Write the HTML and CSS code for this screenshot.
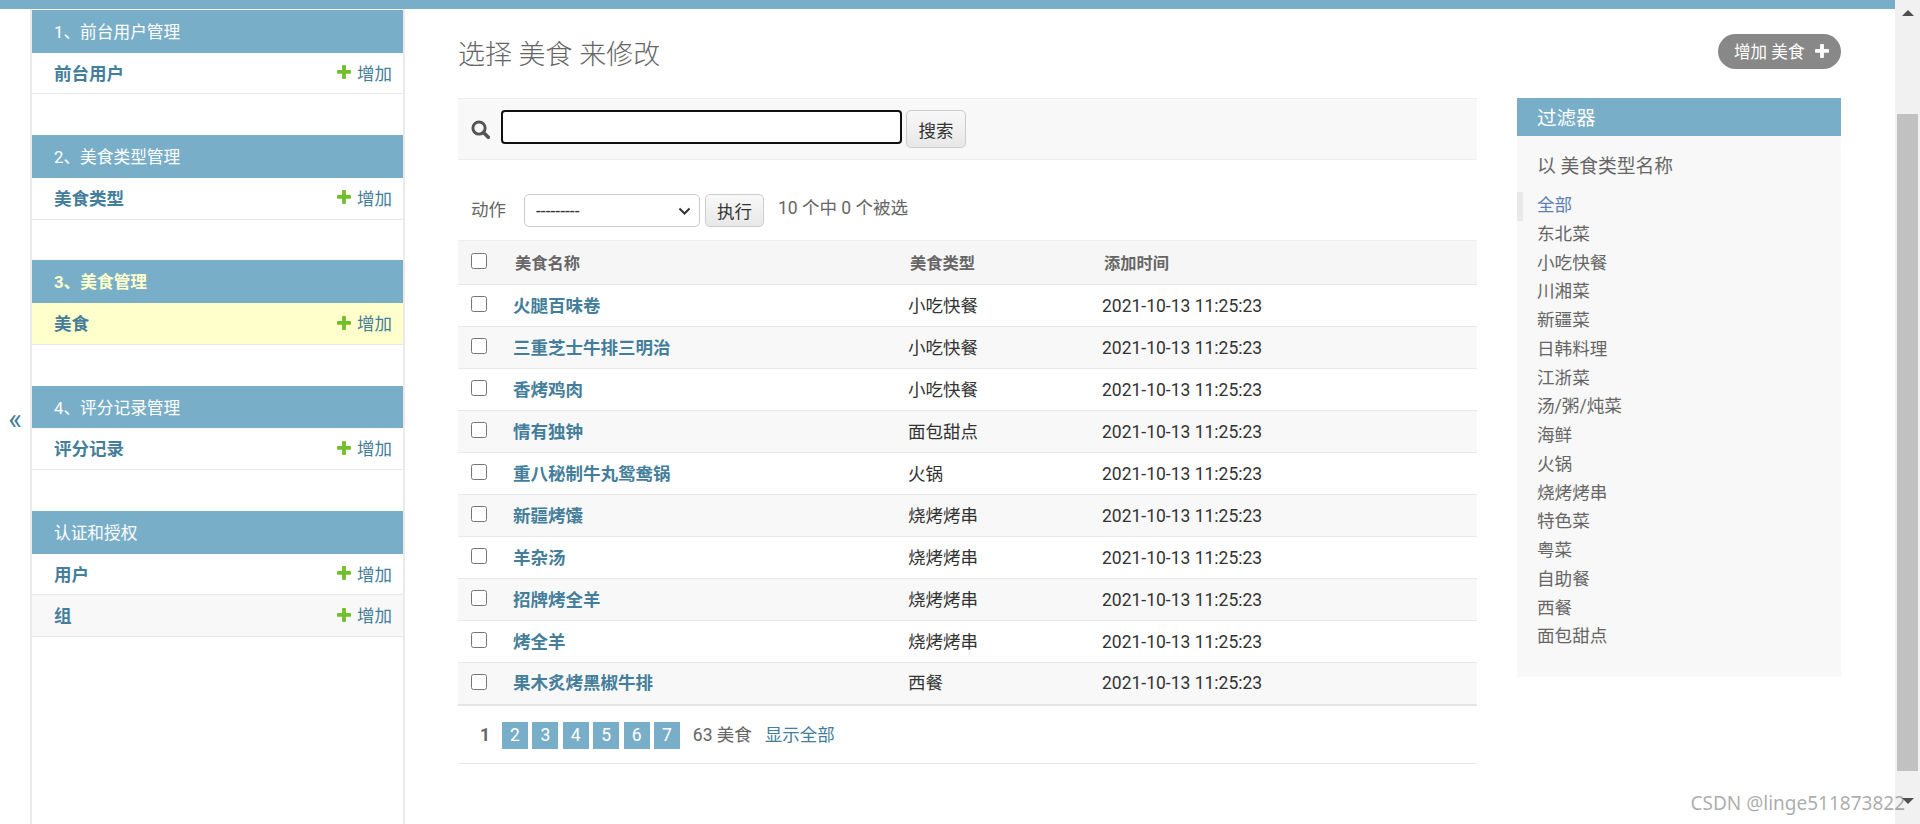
FILE: index.html
```html
<!DOCTYPE html>
<html lang="zh-CN">
<head>
<meta charset="utf-8">
<title>选择 美食 来修改</title>
<link rel="stylesheet" href="styles.css">
</head>
<body>
<svg class="defs" aria-hidden="true"><symbol id="plus" viewBox="192 192 1408 1408"><path d="M1600 796v192q0 40-28 68t-68 28h-416v416q0 40-28 68t-68 28h-192q-40 0-68-28t-28-68v-416h-416q-40 0-68-28t-28-68v-192q0-40 28-68t68-28h416v-416q0-40 28-68t68-28h192q40 0 68 28t28 68v416h416q40 0 68 28t28 68z"/></symbol></svg>
<div class="page">
  <div class="viewport">
    <div class="topbar"></div>
    <div class="main">
      <div class="toggle"><span>«</span></div>
      <nav class="sidebar">
        <section class="module">
          <div class="caption">1、前台用户管理</div>
          <div class="mrow"><a class="mname">前台用户</a><a class="madd"><svg class="plus"><use href="#plus"/></svg>增加</a></div>
        </section>
        <section class="module">
          <div class="caption">2、美食类型管理</div>
          <div class="mrow"><a class="mname">美食类型</a><a class="madd"><svg class="plus"><use href="#plus"/></svg>增加</a></div>
        </section>
        <section class="module">
          <div class="caption current">3、美食管理</div>
          <div class="mrow active"><a class="mname">美食</a><a class="madd"><svg class="plus"><use href="#plus"/></svg>增加</a></div>
        </section>
        <section class="module">
          <div class="caption">4、评分记录管理</div>
          <div class="mrow"><a class="mname">评分记录</a><a class="madd"><svg class="plus"><use href="#plus"/></svg>增加</a></div>
        </section>
        <section class="module">
          <div class="caption">认证和授权</div>
          <div class="mrow"><a class="mname">用户</a><a class="madd"><svg class="plus"><use href="#plus"/></svg>增加</a></div>
          <div class="mrow alt"><a class="mname">组</a><a class="madd"><svg class="plus"><use href="#plus"/></svg>增加</a></div>
        </section>
      </nav>
      <main class="content">
        <div class="titlerow">
          <h1 class="title">选择 美食 来修改</h1>
          <a class="addbtn">增加 美食<svg class="plus white"><use href="#plus"/></svg></a>
        </div>
        <div class="columns">
          <div class="changelist">
            <div class="toolbar">
              <svg class="searchicon" viewBox="0 0 18 18"><circle cx="7.6" cy="7.6" r="5.8" fill="none" stroke="#555" stroke-width="2.8"/><path d="M11.8 11.8l4.6 4.6" stroke="#555" stroke-width="3.4" stroke-linecap="round"/></svg>
              <input class="searchbox" type="text">
              <button class="btn searchbtn" type="button">搜索</button>
            </div>
            <div class="actions">
              <span class="actlabel">动作</span>
              <select class="actselect"><option>---------</option></select>
              <button class="btn gobtn" type="button">执行</button>
              <span class="counter">10 个中 0 个被选</span>
            </div>
            <table class="results">
              <colgroup><col class="c1"><col class="c2"><col class="c3"><col class="c4"></colgroup>
              <thead>
                <tr><th class="cbcell"><input class="cb" type="checkbox"></th><th>美食名称</th><th>美食类型</th><th>添加时间</th></tr>
              </thead>
              <tbody>
                <tr><td class="cbcell"><input class="cb" type="checkbox"></td><td><a class="name">火腿百味卷</a></td><td>小吃快餐</td><td>2021-10-13 11:25:23</td></tr>
                <tr><td class="cbcell"><input class="cb" type="checkbox"></td><td><a class="name">三重芝士牛排三明治</a></td><td>小吃快餐</td><td>2021-10-13 11:25:23</td></tr>
                <tr><td class="cbcell"><input class="cb" type="checkbox"></td><td><a class="name">香烤鸡肉</a></td><td>小吃快餐</td><td>2021-10-13 11:25:23</td></tr>
                <tr><td class="cbcell"><input class="cb" type="checkbox"></td><td><a class="name">情有独钟</a></td><td>面包甜点</td><td>2021-10-13 11:25:23</td></tr>
                <tr><td class="cbcell"><input class="cb" type="checkbox"></td><td><a class="name">重八秘制牛丸鸳鸯锅</a></td><td>火锅</td><td>2021-10-13 11:25:23</td></tr>
                <tr><td class="cbcell"><input class="cb" type="checkbox"></td><td><a class="name">新疆烤馕</a></td><td>烧烤烤串</td><td>2021-10-13 11:25:23</td></tr>
                <tr><td class="cbcell"><input class="cb" type="checkbox"></td><td><a class="name">羊杂汤</a></td><td>烧烤烤串</td><td>2021-10-13 11:25:23</td></tr>
                <tr><td class="cbcell"><input class="cb" type="checkbox"></td><td><a class="name">招牌烤全羊</a></td><td>烧烤烤串</td><td>2021-10-13 11:25:23</td></tr>
                <tr><td class="cbcell"><input class="cb" type="checkbox"></td><td><a class="name">烤全羊</a></td><td>烧烤烤串</td><td>2021-10-13 11:25:23</td></tr>
                <tr><td class="cbcell"><input class="cb" type="checkbox"></td><td><a class="name">果木炙烤黑椒牛排</a></td><td>西餐</td><td>2021-10-13 11:25:23</td></tr>
              </tbody>
            </table>
            <div class="paginator">
              <span class="cur">1</span>
              <a class="pg">2</a><a class="pg">3</a><a class="pg">4</a><a class="pg">5</a><a class="pg">6</a><a class="pg">7</a>
              <span class="total">63 美食</span>
              <a class="showall">显示全部</a>
            </div>
          </div>
          <aside class="filter">
            <h2 class="fhead">过滤器</h2>
            <h3 class="fby">以 美食类型名称</h3>
            <ul class="flist">
              <li class="sel">全部</li><li>东北菜</li><li>小吃快餐</li><li>川湘菜</li><li>新疆菜</li><li>日韩料理</li><li>江浙菜</li><li>汤/粥/炖菜</li><li>海鲜</li><li>火锅</li><li>烧烤烤串</li><li>特色菜</li><li>粤菜</li><li>自助餐</li><li>西餐</li><li>面包甜点</li>
            </ul>
          </aside>
        </div>
      </main>
    </div>
  </div>
  <div class="scrollbar">
    <div class="arrow up"></div>
    <div class="thumb"></div>
    <div class="arrow down"></div>
  </div>
</div>
<div class="watermark">CSDN @linge511873822</div>
</body>
</html>
```
FILE: styles.css
```css
* { box-sizing: border-box; }
html, body { margin: 0; height: 824px; overflow: hidden; background: #fff; }
body { font-family: Roboto, "Noto Sans CJK SC", sans-serif; font-size: 17.5px; color: #333; }
.defs { display: none; }
.page { display: flex; height: 824px; }
.viewport { flex: 1; min-width: 0; display: flex; flex-direction: column; }
.topbar { height: 9px; background: #79aec8; flex: none; }
.main { flex: 1; display: flex; min-height: 0; }

.toggle { width: 30px; flex: none; display: flex; align-items: center; justify-content: center; color: #447e9b; font-size: 29px; }
.toggle span { margin-top: 5px; }

.sidebar { width: 375px; flex: none; border-left: 2px solid #eaeaea; border-right: 2px solid #eaeaea; padding-top: 0.9px; }
.module { margin-bottom: 40.75px; }
.caption { height: 42.75px; background: #79aec8; color: #fff; font-size: 16.7px; line-height: 45px; padding-left: 22px; white-space: nowrap; }
.caption.current { color: #ffc; font-weight: 700; }
.mrow { height: 41.75px; border-bottom: 1px solid #e8e8e8; display: flex; align-items: center; justify-content: space-between; padding: 0 11px 2px 22px; font-size: 17.5px; }
.mrow.active { background: #ffc; }
.mrow.alt { background: #f8f8f8; }
.mname { color: #447e9b; font-weight: 700; }
.madd { color: #447e9b; display: flex; align-items: center; }
.plus { width: 14px; height: 14px; fill: #70bf2b; margin-right: 6px; flex: none; }
.plus.white { fill: #fff; margin: 0 0 0 10px; }

.content { flex: 1; min-width: 0; padding: 0 54px 0 53px; }
.titlerow { height: 89px; display: flex; justify-content: space-between; align-items: flex-start; }
.title { margin: 0; padding-top: 26px; font-size: 27px; line-height: 40px; font-weight: 300; color: #666; }
.addbtn { margin-top: 25px; height: 35px; width: 123px; background: #888; color: #fff; border-radius: 18px; display: flex; align-items: center; padding: 0 0 2px 16px; font-size: 16.6px; white-space: nowrap; }

.columns { display: flex; justify-content: space-between; align-items: flex-start; }
.changelist { width: 1019px; flex: none; }

.toolbar { height: 62px; background: #f8f8f8; border-top: 1px solid #eee; border-bottom: 1px solid #eee; display: flex; align-items: flex-start; padding: 11px 0 0 13px; }
.searchicon { width: 19px; height: 19px; margin: 10px 11px 0 0; flex: none; }
.searchbox { width: 401px; height: 34px; border: 2.5px solid #101010; border-radius: 4px; background: #fff; margin: 0; padding: 0; outline: none; }
.btn { font-family: inherit; font-size: 17.5px; color: #333; background: linear-gradient(#f8f8f8, #e8e8e8); border: 1px solid #ccc; border-radius: 5px; padding: 0; margin: 0; }
.searchbtn { width: 60px; height: 38px; margin-left: 4px; }

.actions { height: 80px; display: flex; align-items: flex-start; padding: 34px 0 0 13px; }
.actlabel { width: 53px; color: #666; line-height: 32px; }
.actselect { width: 176px; height: 33px; border: 1px solid #ccc; border-radius: 5px; font-family: inherit; font-size: 17.5px; color: #333; padding: 0 6px 0 11px; margin: 0; appearance: none; background: #fff url("data:image/svg+xml,%3Csvg xmlns='http://www.w3.org/2000/svg' width='13' height='8' viewBox='0 0 13 8'%3E%3Cpath d='M1.5 1.5l5 5 5-5' fill='none' stroke='%23333' stroke-width='2'/%3E%3C/svg%3E") no-repeat right 8px center; }
.gobtn { width: 59px; height: 33px; margin-left: 5px; }
.counter { margin-left: 14px; color: #666; line-height: 29px; white-space: nowrap; }

.results { width: 1019px; border-collapse: collapse; table-layout: fixed; }
.c1 { width: 45px; }
.c2 { width: 395px; }
.c3 { width: 194px; }
.results th { height: 44px; background: #f6f6f6; border-top: 1px solid #eee; border-bottom: 1px solid #e6e6e6; text-align: left; padding: 0 0 1px 12px; font-size: 16.25px; font-weight: 600; color: #666; }
.results td { height: 42px; border-bottom: 1px solid #e8e8e8; padding: 0 0 0 10px; font-size: 17.5px; line-height: 24px; color: #333; }
.results tbody tr:nth-child(even) { background: #f8f8f8; }
.results tbody tr:last-child td { border-bottom: 2px solid #e4e4e4; }
.results .cbcell { padding: 0 0 3px 13px; }
.results th.cbcell { padding: 0 0 4px 13px; }
.cb { width: 16px; height: 16px; margin: 0; display: block; }
.name { color: #447e9b; font-weight: 700; }

.paginator { height: 58px; border-bottom: 1px solid #e8e8e8; display: flex; align-items: flex-start; padding: 16px 0 0 22px; color: #666; }
.cur { font-weight: 700; width: 22px; line-height: 27px; }
.pg { width: 26px; height: 27px; background: #79aec8; color: #fff; text-align: center; line-height: 27px; margin-right: 4.4px; }
.total { margin-left: 8.5px; line-height: 27px; white-space: nowrap; }
.showall { margin-left: 13px; color: #447e9b; line-height: 27px; white-space: nowrap; }

.filter { width: 324px; flex: none; background: #f8f8f8; height: 579px; }
.fhead { margin: 0; height: 38px; background: #79aec8; color: #fff; font-size: 19.5px; font-weight: 400; line-height: 42px; padding-left: 20px; }
.fby { margin: 0; padding: 17px 0 0 20px; height: 56px; font-size: 18.75px; line-height: 28px; font-weight: 400; color: #666; }
.flist { list-style: none; margin: 0; padding: 0; font-size: 17.6px; color: #666; }
.flist li { height: 28.75px; line-height: 27px; padding-left: 20px; }
.flist li.sel { color: #5b80b2; border-left: 6px solid #e8e8e8; padding-left: 14px; }

.scrollbar { width: 25px; flex: none; background: #f1f1f1; display: flex; flex-direction: column; align-items: center; }
.arrow { width: 0; height: 0; border-left: 6px solid transparent; border-right: 6px solid transparent; flex: none; }
.arrow.up { border-bottom: 6px solid #505050; margin-top: 10px; }
.thumb { width: 21px; height: 657px; background: #c1c1c1; margin-top: 98px; flex: none; }
.arrow.down { border-top: 6px solid #505050; margin-top: 27px; }

.watermark { position: absolute; right: 15px; top: 788px; font-family: "Noto Sans", sans-serif; font-size: 19px; line-height: 30px; color: rgba(90, 90, 90, 0.5); white-space: nowrap; }
```
